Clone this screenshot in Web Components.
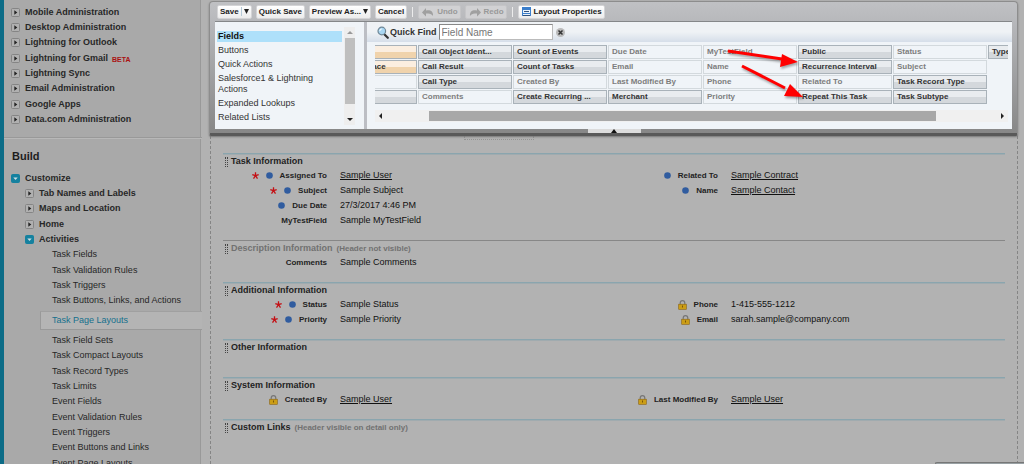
<!DOCTYPE html>
<html lang="en">
<head>
<meta charset="utf-8">
<meta name="viewport" content="width=device-width, initial-scale=1">
<title>Task Page Layout</title>
<style>
  html, body { margin: 0; height: 100%; }
  body { background: #b2b2b2; font: 9px/15px "Liberation Sans", Arial, sans-serif; color: #222; overflow: hidden; }
</style>
</head>
<body>
<setup-app>
  <setup-nav slot="nav">
    <nav-group>
      <nav-item kind="closed">Mobile Administration</nav-item>
      <nav-item kind="closed">Desktop Administration</nav-item>
      <nav-item kind="closed">Lightning for Outlook</nav-item>
      <nav-item kind="closed" tag="BETA">Lightning for Gmail</nav-item>
      <nav-item kind="closed">Lightning Sync</nav-item>
      <nav-item kind="closed">Email Administration</nav-item>
      <nav-item kind="closed">Google Apps</nav-item>
      <nav-item kind="closed">Data.com Administration</nav-item>
    </nav-group>
    <nav-group heading="Build">
      <nav-item kind="open">Customize</nav-item>
      <nav-item kind="closed" level="1">Tab Names and Labels</nav-item>
      <nav-item kind="closed" level="1">Maps and Location</nav-item>
      <nav-item kind="closed" level="1">Home</nav-item>
      <nav-item kind="open" level="1">Activities</nav-item>
      <nav-item kind="leaf">Task Fields</nav-item>
      <nav-item kind="leaf">Task Validation Rules</nav-item>
      <nav-item kind="leaf">Task Triggers</nav-item>
      <nav-item kind="leaf">Task Buttons, Links, and Actions</nav-item>
      <nav-item kind="current">Task Page Layouts</nav-item>
      <nav-item kind="leaf">Task Field Sets</nav-item>
      <nav-item kind="leaf">Task Compact Layouts</nav-item>
      <nav-item kind="leaf">Task Record Types</nav-item>
      <nav-item kind="leaf">Task Limits</nav-item>
      <nav-item kind="leaf">Event Fields</nav-item>
      <nav-item kind="leaf">Event Validation Rules</nav-item>
      <nav-item kind="leaf">Event Triggers</nav-item>
      <nav-item kind="leaf">Event Buttons and Links</nav-item>
      <nav-item kind="leaf">Event Page Layouts</nav-item>
    </nav-group>
  </setup-nav>

  <layout-editor slot="editor">
    <tool-button slot="tools" menu="split">Save</tool-button>
    <tool-button slot="tools">Quick Save</tool-button>
    <tool-button slot="tools" menu="plain">Preview As...</tool-button>
    <tool-button slot="tools">Cancel</tool-button>
    <tool-divider slot="tools"></tool-divider>
    <tool-button slot="tools" icon="undo" off>Undo</tool-button>
    <tool-button slot="tools" icon="redo" off>Redo</tool-button>
    <tool-divider slot="tools"></tool-divider>
    <tool-button slot="tools" icon="props">Layout Properties</tool-button>

    <category-list slot="categories"></category-list>
    <field-palette slot="palette">
      <palette-field kind="special"></palette-field>
      <palette-field kind="special" indent>Blank Space</palette-field>
      <palette-field kind="used"></palette-field>
      <palette-field></palette-field>
      <palette-field>Call Object Ident...</palette-field>
      <palette-field>Call Result</palette-field>
      <palette-field>Call Type</palette-field>
      <palette-field kind="used">Comments</palette-field>
      <palette-field>Count of Events</palette-field>
      <palette-field>Count of Tasks</palette-field>
      <palette-field kind="used">Created By</palette-field>
      <palette-field>Create Recurring ...</palette-field>
      <palette-field kind="used">Due Date</palette-field>
      <palette-field kind="used">Email</palette-field>
      <palette-field kind="used">Last Modified By</palette-field>
      <palette-field>Merchant</palette-field>
      <palette-field kind="used">MyTestField</palette-field>
      <palette-field kind="used">Name</palette-field>
      <palette-field kind="used">Phone</palette-field>
      <palette-field kind="used">Priority</palette-field>
      <palette-field>Public</palette-field>
      <palette-field>Recurrence Interval</palette-field>
      <palette-field kind="used">Related To</palette-field>
      <palette-field>Repeat This Task</palette-field>
      <palette-field kind="used">Status</palette-field>
      <palette-field kind="used">Subject</palette-field>
      <palette-field>Task Record Type</palette-field>
      <palette-field>Task Subtype</palette-field>
      <palette-field>Type</palette-field>
    </field-palette>
  </layout-editor>

  <detail-section heading="Task Information">
    <detail-field label="Assigned To" marks="required dot" link>Sample User</detail-field>
    <detail-field label="Subject" marks="required dot">Sample Subject</detail-field>
    <detail-field label="Due Date" marks="dot">27/3/2017 4:46 PM</detail-field>
    <detail-field label="MyTestField">Sample MyTestField</detail-field>
    <detail-field slot="right" label="Related To" marks="dot" link>Sample Contract</detail-field>
    <detail-field slot="right" label="Name" marks="dot" link>Sample Contact</detail-field>
  </detail-section>
  <detail-section heading="Description Information" note="(Header not visible)" muted>
    <detail-field label="Comments">Sample Comments</detail-field>
  </detail-section>
  <detail-section heading="Additional Information">
    <detail-field label="Status" marks="required dot">Sample Status</detail-field>
    <detail-field label="Priority" marks="required dot">Sample Priority</detail-field>
    <detail-field slot="right" label="Phone" marks="lock">1-415-555-1212</detail-field>
    <detail-field slot="right" label="Email" marks="lock">sarah.sample@company.com</detail-field>
  </detail-section>
  <detail-section heading="Other Information"></detail-section>
  <detail-section heading="System Information">
    <detail-field label="Created By" marks="lock" link>Sample User</detail-field>
    <detail-field slot="right" label="Last Modified By" marks="lock" link>Sample User</detail-field>
  </detail-section>
  <detail-section heading="Custom Links" note="(Header visible on detail only)"></detail-section>
</setup-app>

<script>
const define = (name, render, after) => customElements.define(name, class extends HTMLElement {
  connectedCallback() {
    if (this.shadowRoot) return;
    this.attachShadow({ mode: 'open' }).innerHTML = render(this);
    if (after) after(this, this.shadowRoot);
  }
});
const attr = (el, name) => el.getAttribute(name) || '';

/* Page frame: navigation column, editor panel and the layout canvas. */
define('setup-app', () => `
  <style>
    :host { display: flex; height: 100vh; overflow: hidden; }
    main { flex: 1; min-width: 0; margin: 0 6px 0 7px; display: flex; flex-direction: column; }
    .canvas { flex: 1; margin-left: 1px; border: 1px dashed #858585; border-width: 0 1px; padding: 0 12px; }
    .drop { width: 68px; height: 3px; margin: 0 0 13px 241px; border: 1px dotted #939393; border-top: 0; }
    .dock { position: fixed; right: 0; bottom: 0; width: 88px; height: 1px; border: 1px solid #777; border-width: 1px 0 0 1px; border-radius: 3px 0 0 0; background: #98a0a3; }
  </style>
  <slot name="nav"></slot>
  <main>
    <slot name="editor"></slot>
    <div class="canvas"><div class="drop"></div><slot></slot></div>
  </main>
  <div class="dock"></div>`);

define('setup-nav', () => `
  <style>
    :host { display: block; width: 198px; flex: none; border-left: 4px solid #0c6c87; background: linear-gradient(90deg, #a9a9a9 196px, #999 196px, #999 197px, #b2b2b2 197px); }
    nav { padding-top: 5px; }
  </style>
  <nav aria-label="Setup"><slot></slot></nav>`);

define('nav-group', el => `
  <style>
    :host { display: block; }
    :host([heading]) { border-top: 1px solid #999; box-shadow: inset 0 1px #b8b8b8; margin-top: 10px; padding-top: 10px; }
    h2 { margin: 0 0 7px 8px; font-size: 11px; line-height: 16px; color: #1d1d1d; }
    ::slotted(nav-item:nth-child(3n)) { padding-bottom: 1px; }
  </style>
  ${attr(el, 'heading') ? `<h2>${attr(el, 'heading')}</h2>` : ''}<slot></slot>`);

define('nav-item', el => {
  const open = attr(el, 'kind') === 'open';
  const icon = /open|closed/.test(attr(el, 'kind')) ? `
    <svg width="9" height="9" viewBox="0 0 9 9" aria-hidden="true">
      <rect x=".5" y=".5" width="8" height="8" rx="1" fill="${open ? '#15819f' : '#b0b0b0'}" stroke="${open ? '#15819f' : '#858585'}"/>
      <path d="${open ? 'M2.3 3.5h4.4L4.5 6z' : 'M3.3 2.3v4.4L6.3 4.5z'}" fill="${open ? '#cfe0e5' : '#222'}"/>
    </svg>` : '';
  return `
  <style>
    :host { display: flex; align-items: center; height: 15px; padding-left: 7px; font-weight: bold; }
    :host([level]) { padding-left: 21px; }
    :host([kind=leaf]) { padding-left: 48px; font-weight: normal; }
    :host([kind=current]) { height: 17px; margin: 2px 0 3px 36px; padding-left: 11px; font-weight: normal; background: #b4b4b4; border: 1px solid #999; border-right: 0; border-top-color: #a0a0a0; }
    svg { margin-right: 5px; flex: none; }
    a { color: #272727; text-decoration: none; white-space: nowrap; }
    :host([kind=current]) a { color: #14708d; }
    sub { margin: 2px 0 0 4px; font-size: 7px; line-height: 9px; color: #a11; }
  </style>
  ${icon}<a href="#"><slot></slot></a>${attr(el, 'tag') ? `<sub>${attr(el, 'tag')}</sub>` : ''}`;
});

/* Floating editor panel: toolbar above a category list and the palette. */
define('layout-editor', () => `
  <style>
    :host { display: block; position: relative; border: 1px solid #8d8d8d; border-bottom: 3px solid #595959; border-radius: 4px 4px 2px 2px; margin-top: 1px;
      background: linear-gradient(#c0c1c4, #b2b3b6 30px, #878787); padding: 0 5px 4px; box-shadow: 0 1px 2px #777; }
    .tools { display: flex; align-items: center; gap: 4px; height: 19px; padding-left: 2px; border-bottom: 1px solid #858789; }
    .panes { display: flex; gap: 3px; background: #bcbec4; height: 107px; }
    .left { width: 149px; flex: none; background: #f0f4f8; }
    .right { flex: 1; min-width: 0; background: #f0f4f8; }
    .handle { position: absolute; left: 50%; bottom: 0; margin-left: -26px; width: 53px; height: 4px; padding: 0; border: 0; background: #dcdcdc; line-height: 0; }
  </style>
  <div class="tools" role="toolbar"><slot name="tools"></slot></div>
  <div class="panes">
    <div class="left"><slot name="categories"></slot></div>
    <div class="right"><slot name="palette"></slot></div>
  </div>
  <button class="handle" type="button" aria-label="Collapse"><svg width="6" height="4" viewBox="0 0 6 4"><path d="M0 4L3 0l3 4z" fill="#111"/></svg></button>`);

const toolIcons = {
  undo: '<svg class="icon" width="12" height="10" viewBox="0 0 12 10"><path d="M0 5.500L4 1v2.500C8 2.600 11.500 4 11 9 9.600 6.700 7.500 6 4 6.600V9.500z" fill="#a0a0a0"/></svg>',
  redo: '<svg class="icon" width="12" height="10" viewBox="0 0 12 10"><path d="M12 5.500L8 1v2.500C4 2.600.5 4 1 9 2.400 6.700 4.500 6 8 6.600V9.500z" fill="#a0a0a0"/></svg>',
  props: '<svg class="icon" width="9" height="9" viewBox="0 0 9 9"><path d="M0 0h9v9H0z" fill="#3b7ecb"/><path d="M1 3h7v3H1zM1 7h7v2H1z" fill="#e9f2fb"/><path d="M2 4h5v1H2zM1 8h7v1H1z" fill="#31517c"/></svg>'
};
define('tool-button', el => `
  <style>
    :host { display: block; }
    button { display: flex; align-items: center; gap: 2px; box-sizing: border-box; height: 14px; padding: 0 2px; border: 1px solid #d4d4d6; border-radius: 2px; background: linear-gradient(#fff, #ececec); font: bold 8px/12px "Liberation Sans", Arial, sans-serif; color: #222; white-space: nowrap; }
    button:disabled { background: #d1d1d3; border-color: #c5c5c7; color: #999; }
    .icon { margin: 0 1px; }
    .split { border-left: 1px solid #b5cad8; padding-left: 2px; }
    .arrow { display: flex; align-items: center; height: 9px; }
  </style>
  <button type="button" ${el.hasAttribute('off') ? 'disabled' : ''}>${toolIcons[attr(el, 'icon')] || ''}<span><slot></slot></span>${
    attr(el, 'menu') ? `<span class="arrow ${attr(el, 'menu')}"><svg width="5" height="5" viewBox="0 0 5 5"><path d="M0 0h5L2.500 5z" fill="#222"/></svg></span>` : ''}</button>`);

define('tool-divider', () => `
  <style>:host { display: block; width: 1px; height: 10px; background: #ececec; margin: 0 1px; }</style>`);

define('category-list', () => `
  <style>
    :host { display: flex; justify-content: space-between; padding: 5px 9px 4px 2px; }
    ul { list-style: none; margin: 4px 0 0; padding: 0; width: 125px; }
    li { padding: 0 1px; line-height: 11px; margin-bottom: 3px; }
    li.on { background: #aee0fa; font-weight: bold; }
    a { color: #333; text-decoration: none; }
    .on a { color: #111; }
    .bar { width: 11px; height: 98px; background: #eee; display: flex; flex-direction: column; align-items: center; justify-content: space-between; }
    .thumb { width: 10px; height: 66px; margin-bottom: 10px; background: #bfbfbf; }
    svg { margin: 4px 0; }
  </style>
  <ul>
    <li class="on"><a href="#">Fields</a></li>
    <li><a href="#">Buttons</a></li>
    <li><a href="#">Quick Actions</a></li>
    <li><a href="#">Salesforce1 &amp; Lightning Actions</a></li>
    <li><a href="#">Expanded Lookups</a></li>
    <li><a href="#">Related Lists</a></li>
  </ul>
  <div class="bar">
    <svg width="6" height="3" viewBox="0 0 6 3"><path d="M0 3L3 0l3 3z" fill="#999"/></svg>
    <div class="thumb"></div>
    <svg width="6" height="3" viewBox="0 0 6 3"><path d="M0 0h6L3 3z" fill="#222"/></svg>
  </div>`);

define('field-palette', () => `
  <style>
    :host { display: block; }
    .find { display: flex; align-items: center; height: 20px; padding-left: 10px; background: linear-gradient(#eff2f5 10px, #d6dee9); }
    label { font-weight: bold; margin: 0 2px 0 1px; color: #333; }
    input { box-sizing: border-box; width: 114px; height: 16px; padding: 0 2px; border: 1px solid #bbb; border-top-color: #888; border-left-color: #888; background: #fff; font: 10px "Liberation Sans", Arial, sans-serif; color: #333; }
    input::placeholder { color: #777; }
    .clear { border: 0; padding: 0; margin-left: 3px; width: 9px; height: 9px; background: none; line-height: 0; }
    .view { overflow: hidden; margin: 3px 4px 0 8px; }
    .grid { position: relative; display: grid; grid-auto-flow: column; grid-template-rows: repeat(4, 14px); grid-auto-columns: 94px; gap: 1px; width: max-content; }
    .marks { position: absolute; left: 400px; top: 0; filter: drop-shadow(1px 2px 1px #0005); }
    .bar { display: flex; align-items: center; height: 12px; margin: 6px 4px 0 8px; background: #f0f0f0; }
    .bar svg { margin: 0 4px; flex: none; }
    .track { flex: 1; }
    .thumb { height: 10px; margin: 0 10% 0 7%; background: #a8a8a8; }
  </style>
  <div class="find">
    <svg width="12" height="13" viewBox="0 0 12 13" aria-hidden="true"><path d="M7 8l3.800 3.800" stroke="#333" stroke-width="2.200" stroke-linecap="round"/><circle cx="4.800" cy="5" r="3.800" fill="#a9d7f3" stroke="#6f8796" stroke-width="1.200"/><path d="M2.800 5a2 2 0 0 1 2-2" stroke="#fff" fill="none"/></svg>
    <label for="quick">Quick Find</label><input id="quick" type="text" placeholder="Field Name">
    <button class="clear" type="button" aria-label="Clear"><svg width="9" height="9" viewBox="0 0 9 9"><circle cx="4.500" cy="4.500" r="4.500" fill="#bbb"/><path d="M2.500 2.500l4 4m0-4l-4 4" stroke="#333" stroke-width="1.500"/></svg></button>
  </div>
  <div class="view">
    <div class="grid">
      <slot></slot>
      <svg class="marks" width="90" height="59" viewBox="0 0 90 59" aria-hidden="true">
        <path d="M5 6l54 8M19 21l43 22" stroke="#f00" stroke-width="3" fill="none"/>
        <path d="M75 17L57 22l2-13zM80 52l-19-1 6-12z" fill="#f00"/>
      </svg>
    </div>
  </div>
  <div class="bar">
    <svg width="3" height="6" viewBox="0 0 3 6"><path d="M3 0v6L0 3z" fill="#222"/></svg>
    <div class="track"><div class="thumb"></div></div>
    <svg width="3" height="6" viewBox="0 0 3 6"><path d="M0 0v6l3-3z" fill="#222"/></svg>
  </div>`,
  /* The first column is scrolled partly out of view. */
  (el, root) => requestAnimationFrame(() => { root.querySelector('.view').scrollLeft = 52; }));

define('palette-field', () => `
  <style>
    :host { display: block; box-sizing: border-box; height: 14px; padding: 0 3px; border: 1px solid #a9b2b9; background: linear-gradient(#e9ecef 6px, #d4d8dc 6px); font-size: 8px; line-height: 12px; font-weight: bold; color: #333; white-space: nowrap; overflow: hidden; }
    :host([kind=used]) { border-color: #d3d9dd; background: #f0f4f8; color: #7d7d7d; }
    :host([kind=special]) { background: linear-gradient(#fbeee0 6px, #f0d3ac 6px); }
    :host([indent]) { padding-left: 14px; }
  </style>
  <slot></slot>`);

define('detail-section', el => `
  <style>
    :host { display: block; min-height: 37px; border-top: 1px solid #8aa5ae; box-shadow: inset 0 1px #a0abaf; }
    :host([muted]) { border-top-color: #878787; box-shadow: none; }
    header { display: flex; align-items: center; height: 14px; padding-left: 2px; }
    .grip { width: 1px; height: 10px; border: 1px dotted #444; border-width: 0 1px; margin: 1px 3px 0 0; }
    h3 { margin: 0; font-size: 9px; line-height: 14px; color: #222; }
    small { margin-left: 4px; font-size: 8px; font-weight: bold; color: #717171; }
    :host([muted]) h3 { color: #717171; }
    .cols { display: grid; grid-template-columns: 1fr 1fr; padding-bottom: 12px; }
  </style>
  <header><span class="grip"></span><h3>${attr(el, 'heading')}</h3>${attr(el, 'note') ? `<small>${attr(el, 'note')}</small>` : ''}</header>
  <div class="cols"><div><slot></slot></div><div><slot name="right"></slot></div></div>`);

const marks = {
  required: '<svg width="7" height="7" viewBox="0 0 7 7"><path d="M3.500 3.700V.3M3.500 3.700L.3 2.700M3.500 3.700l3.200-1M3.500 3.700l-2 2.900M3.500 3.700l2 2.900" stroke="#c40f14" stroke-width="1.300"/></svg>',
  dot: '<svg width="7" height="7" viewBox="0 0 7 7"><circle cx="3.500" cy="3.500" r="3.300" fill="#305c9f"/></svg>',
  lock: '<svg width="9" height="10" viewBox="0 0 9 10"><path d="M2.200 5V3a2.200 2.200 0 0 1 4.600 0v2" fill="none" stroke="#777" stroke-width="1.200"/><rect x=".7" y="4.200" width="7.600" height="5.100" fill="#cb9d16" stroke="#8c6411" stroke-width=".6"/><path d="M4.500 5.500v2" stroke="#795509"/></svg>'
};
define('detail-field', el => `
  <style>
    :host { display: flex; height: 15px; gap: 13px; }
    .label { width: 104px; display: flex; justify-content: flex-end; align-items: center; font-size: 8px; font-weight: bold; line-height: 15px; white-space: nowrap; }
    svg { margin-right: 7px; flex: none; }
    .value, a { color: #111; white-space: nowrap; }
    a { text-underline-offset: 1px; }
  </style>
  <div class="label">${attr(el, 'marks').split(' ').map(m => marks[m] || '').join('')}<span>${attr(el, 'label')}</span></div>
  <div class="value">${el.hasAttribute('link') ? '<a href="#"><slot></slot></a>' : '<slot></slot>'}</div>`);
</script>
</body>
</html>
